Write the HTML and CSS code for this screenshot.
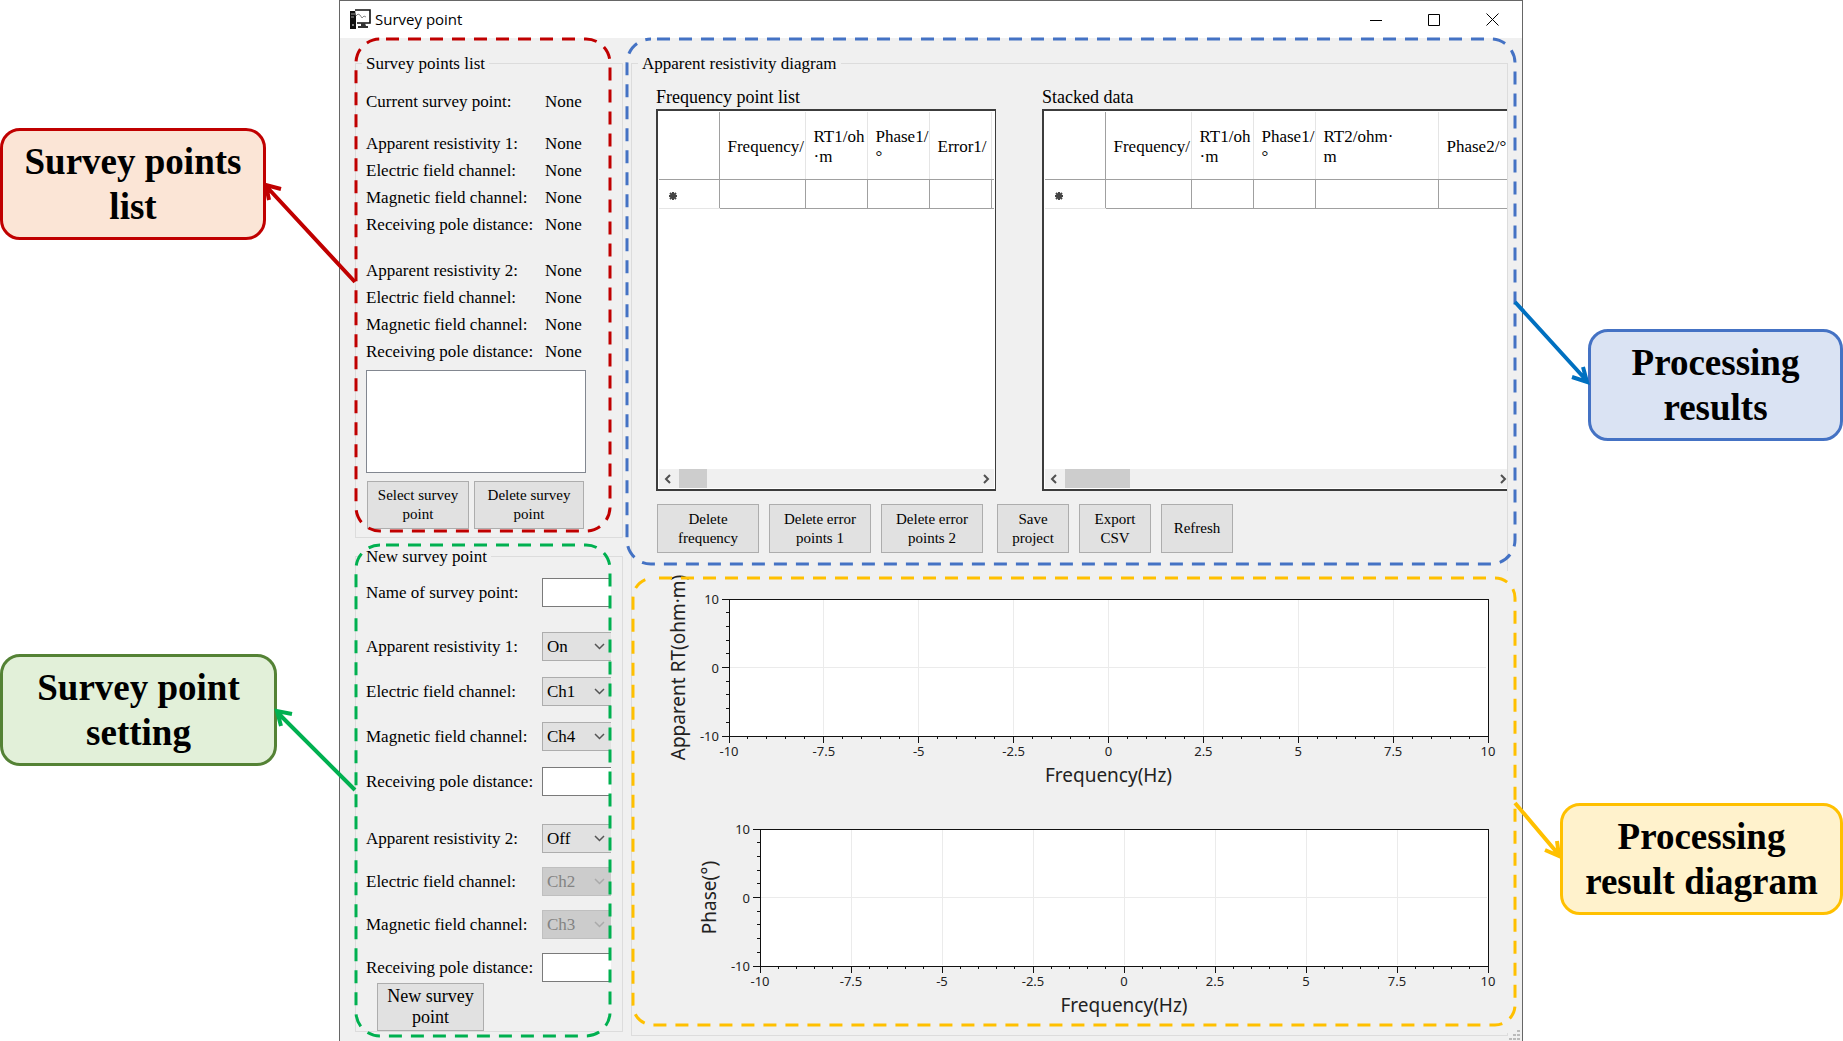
FILE: index.html
```html
<!DOCTYPE html>
<html lang="en">
<head>
    <meta charset="UTF-8">
    <meta name="viewport" content="width=device-width, initial-scale=1.0">
    <title>Survey point</title>
    <link rel="stylesheet" href="styles.css">
</head>
<body>
<div class="page">

    <!-- Left callouts -->
    <aside class="callouts callouts-left">
        <div class="callout callout-red">Survey points list
            <svg class="arrow" width="92" height="100" viewBox="0 0 92 100">
                <path d="M91 99 L2 3 M17 6 L2 2 L5 17"/>
            </svg>
        </div>
        <div class="callout callout-green">Survey point setting
            <svg class="arrow" width="81" height="82" viewBox="0 0 81 82">
                <path d="M80 81 L2 3 M17 5 L2 2 L6 17"/>
            </svg>
        </div>
    </aside>

    <!-- Application window -->
    <main class="window">
        <header class="titlebar">
            <svg class="app-icon" width="21" height="21" viewBox="0 0 21 21">
                <path d="M0 2h6v18H0z" fill="#111"/>
                <path d="M1 5h4M1 8h3" stroke="#999"/>
                <circle cx="3" cy="16" r="1" fill="#aaa"/>
                <path d="M5 1h15v13H7" fill="#fff" stroke="#111" stroke-width="1.6"/>
                <path d="M6 7l2-2 2 1 2 3 2-2 2 1" fill="none" stroke="#888"/>
                <path d="M11 14h4l1 3h2v2H8v-2h3z" fill="#333"/>
            </svg>
            <h1>Survey point</h1>
            <button class="caption" aria-label="Minimize"><svg width="12" height="12"><path d="M0 6.5h12"/></svg></button>
            <button class="caption" aria-label="Maximize"><svg width="12" height="12"><path d="M.5.5h11v11H.5z"/></svg></button>
            <button class="caption" aria-label="Close"><svg width="13" height="13"><path d="M.5.5l12 12M12.5.5l-12 12"/></svg></button>
        </header>

        <div class="client">
            <div class="sidebar">
                <section class="panel">
                    <fieldset class="points">
                        <legend>Survey points list</legend>
                        <dl>
                            <dt>Current survey point:</dt><dd>None</dd>
                        </dl>
                        <dl>
                            <dt>Apparent resistivity 1:</dt><dd>None</dd>
                            <dt>Electric field channel:</dt><dd>None</dd>
                            <dt>Magnetic field channel:</dt><dd>None</dd>
                            <dt>Receiving pole distance:</dt><dd>None</dd>
                        </dl>
                        <dl>
                            <dt>Apparent resistivity 2:</dt><dd>None</dd>
                            <dt>Electric field channel:</dt><dd>None</dd>
                            <dt>Magnetic field channel:</dt><dd>None</dd>
                            <dt>Receiving pole distance:</dt><dd>None</dd>
                        </dl>
                        <select class="listbox" size="5" aria-label="Survey points"></select>
                        <div class="point-buttons">
                            <button class="btn">Select survey point</button>
                            <button class="btn">Delete survey point</button>
                        </div>
                    </fieldset>
                    <div class="frame frame-red"><svg><rect width="100%" height="100%" rx="24"/></svg></div>
                </section>

                <section class="panel">
                    <fieldset class="new-point">
                        <legend>New survey point</legend>
                        <div class="fields">
                            <label for="name">Name of survey point:</label>
                            <input type="text" id="name">
                        </div>
                        <div class="fields fields-first">
                            <label for="res1">Apparent resistivity 1:</label>
                            <select id="res1"><option>On</option><option>Off</option></select>
                            <label for="elec1">Electric field channel:</label>
                            <select id="elec1"><option>Ch1</option></select>
                            <label for="mag1">Magnetic field channel:</label>
                            <select id="mag1"><option>Ch4</option></select>
                            <label for="dist1">Receiving pole distance:</label>
                            <input type="text" id="dist1">
                        </div>
                        <div class="fields fields-second">
                            <label for="res2">Apparent resistivity 2:</label>
                            <select id="res2"><option>Off</option><option>On</option></select>
                            <label for="elec2">Electric field channel:</label>
                            <select id="elec2" disabled><option>Ch2</option></select>
                            <label for="mag2">Magnetic field channel:</label>
                            <select id="mag2" disabled><option>Ch3</option></select>
                            <label for="dist2">Receiving pole distance:</label>
                            <input type="text" id="dist2">
                        </div>
                        <button class="btn btn-new">New survey point</button>
                    </fieldset>
                    <div class="frame frame-green"><svg><rect width="100%" height="100%" rx="24"/></svg></div>
                </section>
            </div>

            <fieldset class="diagram">
                <legend>Apparent resistivity diagram</legend>

                <div class="results">
                    <div class="lists">
                        <section>
                            <h2>Frequency point list</h2>
                            <div class="grid-view">
                                <div class="grid-body">
                                    <table class="freq-table">
                                        <colgroup><col class="c-mark"><col class="c-freq"><col class="c-small"><col class="c-small"><col class="c-small"><col class="c-small"></colgroup>
                                        <tr>
                                            <th></th>
                                            <th>Frequency/</th>
                                            <th>RT1/oh<br>·m</th>
                                            <th>Phase1/<br>°</th>
                                            <th>Error1/</th>
                                            <th></th>
                                        </tr>
                                        <tr>
                                            <td class="mark"><svg width="8" height="8"><path d="M4 0v8M0 4h8M1 1l6 6M7 1l-6 6"/></svg></td>
                                            <td></td><td></td><td></td><td></td><td></td>
                                        </tr>
                                    </table>
                                </div>
                                <div class="scrollbar">
                                    <svg width="8" height="10"><path d="M6 1L2 5l4 4"/></svg>
                                    <span class="track"><span class="thumb thumb-short"></span></span>
                                    <svg width="8" height="10"><path d="M2 1l4 4-4 4"/></svg>
                                </div>
                            </div>
                        </section>
                        <section>
                            <h2>Stacked data</h2>
                            <div class="grid-view grid-view-cut">
                                <div class="grid-body">
                                    <table class="stack-table">
                                        <colgroup><col class="c-mark"><col class="c-freq"><col class="c-small"><col class="c-small"><col class="c-large"><col class="c-large"></colgroup>
                                        <tr>
                                            <th></th>
                                            <th>Frequency/</th>
                                            <th>RT1/oh<br>·m</th>
                                            <th>Phase1/<br>°</th>
                                            <th>RT2/ohm·<br>m</th>
                                            <th>Phase2/°</th>
                                        </tr>
                                        <tr>
                                            <td class="mark"><svg width="8" height="8"><path d="M4 0v8M0 4h8M1 1l6 6M7 1l-6 6"/></svg></td>
                                            <td></td><td></td><td></td><td></td><td></td>
                                        </tr>
                                    </table>
                                </div>
                                <div class="scrollbar">
                                    <svg width="8" height="10"><path d="M6 1L2 5l4 4"/></svg>
                                    <span class="track"><span class="thumb"></span></span>
                                    <svg width="8" height="10"><path d="M2 1l4 4-4 4"/></svg>
                                </div>
                            </div>
                        </section>
                    </div>
                    <div class="toolbar">
                        <div class="tools tools-wide">
                            <button class="btn">Delete<br>frequency</button>
                            <button class="btn">Delete error<br>points 1</button>
                            <button class="btn">Delete error<br>points 2</button>
                        </div>
                        <div class="tools">
                            <button class="btn">Save<br>project</button>
                            <button class="btn">Export<br>CSV</button>
                            <button class="btn">Refresh</button>
                        </div>
                    </div>
                    <div class="frame frame-blue"><svg><rect width="100%" height="100%" rx="24"/></svg></div>
                </div>

                <div class="plots">
                    <svg class="plot plot-rt" data-title="Apparent RT(ohm·m)"></svg>
                    <svg class="plot plot-phase" data-title="Phase(°)"></svg>
                    <div class="frame frame-yellow"><svg><rect width="100%" height="100%" rx="20"/></svg></div>
                </div>
            </fieldset>
        </div>
        <svg class="grip" width="11" height="11"><path d="M8 1h3M4 5h3M8 5h3M0 9h3M4 9h3M8 9h3"/></svg>
    </main>

    <!-- Right callouts -->
    <aside class="callouts callouts-right">
        <div class="callout callout-blue">Processing results
            <svg class="arrow" width="75" height="83" viewBox="0 0 75 83">
                <path d="M1 1 L73 80 M58 76 L73 81 L69 66"/>
            </svg>
        </div>
        <div class="callout callout-yellow">Processing result diagram
            <svg class="arrow" width="47" height="56" viewBox="0 0 47 56">
                <path d="M1 1 L45 53 M31 48 L45 54 L43 39"/>
            </svg>
        </div>
    </aside>

</div>
<script src="plot.js"></script>
</body>
</html>
```

FILE: styles.css
```css
* {
    box-sizing: border-box;
}
body {
    margin: 0;
    background: #fff;
    color: #000;
    font-family: "Liberation Serif", "Times New Roman", serif;
    font-size: 17px;
}
.page {
    display: grid;
    grid-template-columns: 339px minmax(0, 1fr) 320px;
    min-height: 100vh;
}

/* Callouts */
.callouts {
    display: flex;
    flex-direction: column;
}
.callouts-left {
    align-items: flex-start;
    padding-top: 128px;
    gap: 414px;
}
.callouts-right {
    align-items: flex-end;
    padding-top: 329px;
    gap: 362px;
}
.callout {
    position: relative;
    z-index: 2;
    padding: 8px 16px;
    border: 3px solid;
    border-radius: 20px;
    font-size: 37px;
    font-weight: bold;
    line-height: 45px;
    text-align: center;
}
.callout-red {
    width: 266px;
    background: #fbe5d6;
    border-color: #c00000;
}
.callout-green {
    width: 277px;
    background: #e2f0d9;
    border-color: #548235;
}
.callout-blue {
    width: 255px;
    background: #dae3f3;
    border-color: #4472c4;
}
.callout-yellow {
    width: 283px;
    background: #fff2cc;
    border-color: #ffc000;
}
.arrow {
    position: absolute;
    fill: none;
    stroke-width: 4;
    overflow: visible;
}
.callouts-left .arrow {
    left: calc(100% + 1px);
    top: 52px;
}
.callouts-right .arrow {
    right: calc(100% + 2px);
    bottom: 54px;
}
.callout-red .arrow {
    stroke: #c00000;
}
.callout-green .arrow {
    stroke: #00b050;
}
.callout-blue .arrow {
    stroke: #0070c0;
}
.callout-yellow .arrow {
    stroke: #ffc000;
}

/* Window */
.window {
    position: relative;
    display: flex;
    flex-direction: column;
    background: #f0f0f0;
    border: 1px solid #666;
    border-bottom: 0;
}
.titlebar {
    display: flex;
    align-items: center;
    height: 37px;
    padding: 0 1px 0 10px;
    background: #fff;
}
.titlebar h1 {
    flex: 1;
    margin: 0 0 2px 4px;
    font: 15px "Open Sans", "Noto Sans", sans-serif;
}
.caption {
    width: 58px;
    height: 37px;
    padding: 0;
    border: 0;
    background: none;
}
.caption svg {
    display: block;
    margin: auto;
    fill: none;
    stroke: #000;
}
.client {
    display: grid;
    grid-template-columns: 268px minmax(0, 1fr);
    column-gap: 8px;
    align-items: start;
    padding: 13px 14px 5px 15px;
}
.sidebar {
    display: grid;
    gap: 6px;
}
.panel {
    position: relative;
}
fieldset {
    min-width: 0;
    margin: 0;
    padding: 0;
    border: 1px solid #dcdcdc;
}
legend {
    margin-left: 6px;
    padding: 1px 4px 0;
    line-height: 23px;
}
.grip {
    position: absolute;
    right: 2px;
    bottom: 0;
    stroke: #bbb;
    stroke-width: 2;
    stroke-dasharray: 3 1;
}

/* Dashed frames over the panels */
.frame {
    position: absolute;
    pointer-events: none;
}
.frame svg {
    display: block;
    width: 100%;
    height: 100%;
    overflow: visible;
    fill: none;
    stroke-width: 3;
    stroke-dasharray: 13 9;
    stroke-dashoffset: 38;
}
.frame-red {
    inset: -12px 13px 7px 1px;
    stroke: #c00000;
}
.frame-green {
    inset: 1px 13px -4px 1px;
    stroke: #00b050;
}
.frame-blue {
    inset: -36px -8px -11px -5px;
    stroke: #4472c4;
}
.frame-yellow {
    inset: 7px -7px 8px 1px;
    stroke: #ffc000;
}

/* Buttons */
.btn {
    padding: 0 6px;
    background: #e1e1e1;
    border: 1px solid #adadad;
    color: #000;
    font-family: inherit;
    font-size: 15px;
    line-height: 19px;
}

/* Survey points list */
.points {
    padding: 13px 10px 8px;
}
.points legend,
.new-point legend {
    margin-left: -4px;
}
dl {
    display: grid;
    grid-template-columns: 179px 1fr;
    margin: 0;
    line-height: 27px;
}
dl + dl {
    margin-top: 15px;
}
dl + dl + dl {
    margin-top: 19px;
}
dd {
    margin: 0;
}
.listbox {
    display: block;
    width: 220px;
    height: 103px;
    margin-top: 5px;
    background: #fff;
    border: 1px solid #828790;
    border-radius: 0;
}
.point-buttons {
    display: flex;
    gap: 5px;
    margin: 8px 0 0 1px;
}
.point-buttons .btn {
    width: 102px;
    height: 48px;
}
.point-buttons .btn + .btn {
    width: 110px;
}

/* New survey point */
.new-point {
    padding: 10px 10px 0;
}
.fields {
    display: grid;
    grid-template-columns: 176px 69px;
    grid-auto-rows: 29px;
    align-items: center;
}
.fields-first {
    row-gap: 16px;
    margin-top: 25px;
}
.fields-second {
    row-gap: 14px;
    margin-top: 28px;
}
.fields input,
.fields select {
    width: 100%;
    height: 29px;
    margin: 0;
    padding: 0 4px;
    border: 1px solid #7a7a7a;
    border-right: 0;
    border-radius: 0;
    background: #fff;
    color: #000;
    font-family: inherit;
    font-size: 17px;
}
.fields select {
    appearance: none;
    border-color: #adadad;
    background: #e1e1e1 url("data:image/svg+xml,%3Csvg xmlns='http://www.w3.org/2000/svg' width='11' height='7'%3E%3Cpath d='M1 1l4.500 4.500L10 1' fill='none' stroke='%23555' stroke-width='1.500'/%3E%3C/svg%3E") no-repeat right 6px center;
}
.fields select:disabled {
    border-color: #bfbfbf;
    background-color: #ccc;
    background-image: url("data:image/svg+xml,%3Csvg xmlns='http://www.w3.org/2000/svg' width='11' height='7'%3E%3Cpath d='M1 1l4.500 4.500L10 1' fill='none' stroke='%23aaa' stroke-width='1.500'/%3E%3C/svg%3E");
    color: #838383;
    opacity: 1;
}
.btn-new {
    display: block;
    width: 107px;
    height: 48px;
    margin: 1px 0 0 11px;
    padding: 0 4px;
    font-size: 18px;
    line-height: 21px;
}

/* Processing results */
.results {
    position: relative;
    padding: 10px 0 0 24px;
}
.lists {
    display: grid;
    grid-template-columns: 340px minmax(0, 1fr);
    column-gap: 46px;
}
h2 {
    margin: 0;
    font-size: 18px;
    font-weight: normal;
    line-height: 24px;
}
.grid-view {
    display: flex;
    flex-direction: column;
    height: 382px;
    padding: 1px;
    background: #fff;
    border: 2px solid #3c3c3c;
    border-right-width: 1px;
}
.grid-view-cut {
    border-right: 0;
    padding-right: 0;
}
.grid-body {
    flex: 1;
    overflow: hidden;
}
table {
    table-layout: fixed;
    border-collapse: collapse;
}
.freq-table {
    width: 394px;
}
.stack-table {
    width: 516px;
}
.c-mark {
    width: 60px;
}
.c-freq {
    width: 86px;
}
.c-small {
    width: 62px;
}
.c-large {
    width: 123px;
}
th {
    height: 67px;
    padding: 3px 0 0 8px;
    border-right: 1px solid #e5e5e5;
    border-bottom: 1px solid #a0a0a0;
    background-clip: padding-box;
    font-weight: normal;
    line-height: 20px;
    text-align: left;
    overflow: hidden;
    white-space: nowrap;
}
th:first-child {
    border-right-color: #a0a0a0;
}
td {
    height: 29px;
    padding: 0;
    border-right: 1px solid #a0a0a0;
    border-bottom: 1px solid #a0a0a0;
}
td.mark {
    padding: 4px 0 0 10px;
    border-bottom-color: #e5e5e5;
}
.mark svg {
    display: block;
    stroke: #444;
    stroke-width: 2;
}
.scrollbar {
    display: flex;
    align-items: center;
    gap: 7px;
    height: 19px;
    padding: 0 4px;
    background: #f0f0f0;
}
.scrollbar > svg {
    flex: none;
    margin: 0 0 0 1px;
    fill: none;
    stroke: #505050;
    stroke-width: 2;
}
.grid-view-cut .scrollbar {
    padding-right: 0;
}
.track {
    flex: 1;
    height: 100%;
}
.thumb {
    display: block;
    width: 65px;
    height: 100%;
    background: #cdcdcd;
}
.thumb-short {
    width: 28px;
}
.toolbar {
    display: flex;
    gap: 14px;
    margin: 13px 0 0 1px;
}
.tools {
    display: flex;
    gap: 10px;
}
.tools .btn {
    width: 72px;
    height: 49px;
    padding: 0;
}
.tools-wide .btn {
    width: 102px;
}

/* Processing result diagram */
.plots {
    position: relative;
    display: grid;
    gap: 93px;
    margin: 18px -1px 2px 0;
    padding: 28px 20px 67px 0;
    background: #f0f0f0;
}
.plot {
    height: 137px;
    overflow: visible;
    font-family: "Noto Sans", "Open Sans", sans-serif;
    font-size: 13px;
    fill: #222;
}
.plot-rt {
    width: calc(100% - 97px);
    margin-left: 97px;
}
.plot-phase {
    width: calc(100% - 128px);
    margin-left: 128px;
}
.plot .area {
    fill: #fff;
    stroke: #111;
    shape-rendering: crispEdges;
}
.plot .grid-line {
    stroke: #ebebeb;
    shape-rendering: crispEdges;
}
.plot .tick {
    stroke: #111;
    shape-rendering: crispEdges;
}
.plot .axis-title {
    font-size: 19px;
}
@media (max-width: 1500px) {
    .page {
        min-width: 1500px;
    }
}
```

FILE: plot.js
```js
const SVG_NS = 'http://www.w3.org/2000/svg';

function add(parent, name, attrs, text) {
    const el = document.createElementNS(SVG_NS, name);
    for (const key in attrs) {
        el.setAttribute(key, attrs[key]);
    }
    if (text !== undefined) {
        el.textContent = text;
    }
    parent.appendChild(el);
    return el;
}

// Nested svg works as an anchor, so that percentages and pixels can be mixed
function anchor(parent, x, y) {
    return add(parent, 'svg', { x: x, y: y, overflow: 'visible' });
}

function drawPlot(svg) {
    add(svg, 'rect', { class: 'area', width: '100%', height: '100%' });

    // grid
    for (let i = 1; i < 8; i++) {
        const x = i * 12.5 + '%';
        add(svg, 'line', { class: 'grid-line', x1: x, x2: x, y1: 1, y2: '99%' });
    }
    add(svg, 'line', { class: 'grid-line', x1: 1, x2: '99.8%', y1: '50%', y2: '50%' });

    // x axis, -10..10 with a label every 2.5
    for (let i = 0; i <= 40; i++) {
        const major = i % 5 === 0;
        const point = anchor(svg, i * 2.5 + '%', '100%');
        add(point, 'line', { class: 'tick', y2: major ? 7 : 3 });
        if (major) {
            add(point, 'text', { y: 20, 'text-anchor': 'middle' }, i / 2 - 10);
        }
    }

    // y axis, -10..10 with a label every 10
    for (let i = 0; i <= 10; i++) {
        const major = i % 5 === 0;
        const point = anchor(svg, 0, i * 10 + '%');
        add(point, 'line', { class: 'tick', x1: major ? -7 : -3 });
        if (major) {
            add(point, 'text', { x: -10, y: 5, 'text-anchor': 'end' }, 10 - i * 2);
        }
    }

    add(anchor(svg, '50%', '100%'), 'text', { class: 'axis-title', y: 46, 'text-anchor': 'middle' }, 'Frequency(Hz)');
    add(anchor(svg, -44, '50%'), 'text', { class: 'axis-title', transform: 'rotate(-90)', 'text-anchor': 'middle' }, svg.dataset.title);
}

document.querySelectorAll('.plot').forEach(drawPlot);
```
